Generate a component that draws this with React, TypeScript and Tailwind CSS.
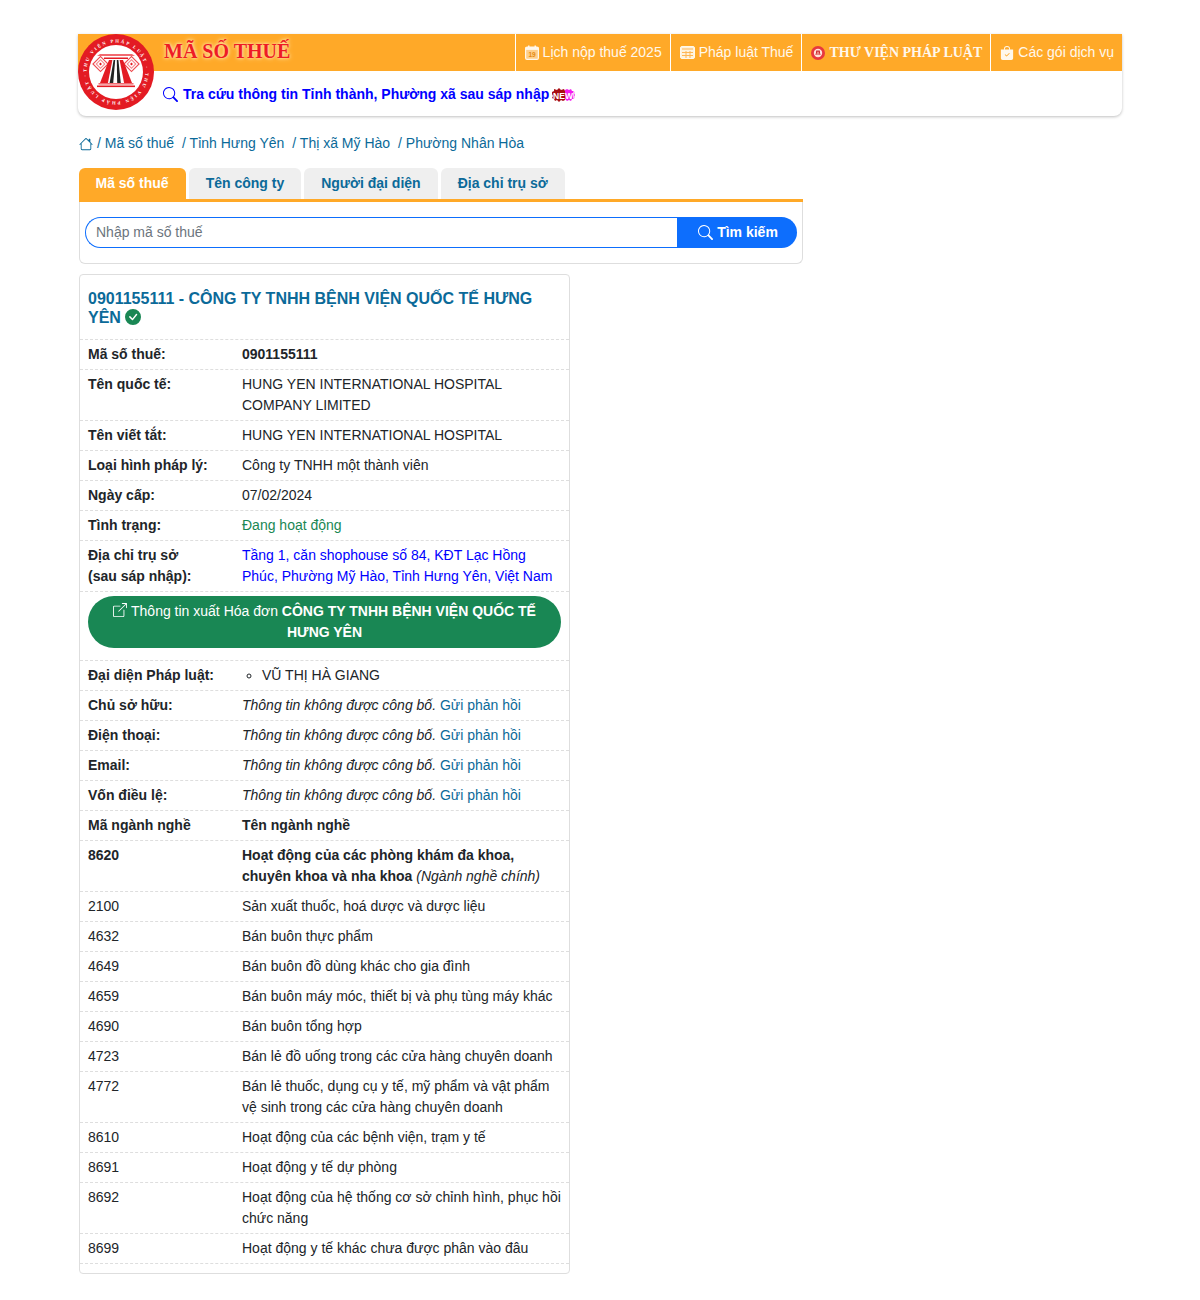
import type { ReactNode } from 'react';
import {
  BsBagCheckFill,
  BsBoxArrowUpRight,
  BsCheckCircleFill,
  BsHouse,
  BsSearch,
} from 'react-icons/bs';

function Spiral({ cx, cy }: { cx: number; cy: number }) {
  return (
    <g transform={`rotate(45 ${cx} ${cy})`} fill="none">
      <rect x={cx - 5.3} y={cy - 5.3} width="10.6" height="10.6" stroke="#ef4a50" strokeWidth="1.2" />
      <rect x={cx - 3} y={cy - 3} width="6" height="6" stroke="#f58a8e" strokeWidth="1.1" />
      <rect x={cx - 1} y={cy - 1} width="2" height="2" fill="#e31b23" />
    </g>
  );
}

function Logo({ size }: { size: number }) {
  return (
    <svg width={size} height={size} viewBox="0 0 76 76">
      <circle cx="38" cy="38" r="38" fill="#e31b23" />
      <circle cx="38" cy="38" r="27" fill="#fff" />
      <defs>
        <path id="ring" d="M38 38 m-29.5 0 a29.5 29.5 0 1 1 59 0 a29.5 29.5 0 1 1 -59 0" />
      </defs>
      <text fontSize="4.6" fontWeight="700" fill="#fff" fontFamily="'Liberation Serif', serif">
        <textPath href="#ring" textLength="182">THƯ VIỆN PHÁP LUẬT · THƯ VIỆN PHÁP LUẬT ·</textPath>
      </text>
      <path d="M22 20h32l3 2H19z" fill="#f26a70" />
      <rect x="26" y="23.5" width="24" height="1.5" fill="#e31b23" />
      <Spiral cx={22.5} cy={30} />
      <Spiral cx={53.5} cy={30} />
      {/* column stripes, wider at the foot */}
      <path d="M31 26h3.4l-4.5 23H22z" fill="#e31b23" />
      <path d="M35.6 26h1.6l-2 23h-3.6z" fill="#222" />
      <path d="M38.8 26h1.6l2.4 23h-3.6z" fill="#222" />
      <path d="M41.6 26H45l9 23h-7.9z" fill="#e31b23" />
      <rect x="20.5" y="49" width="35" height="1.6" fill="#f26a70" />
      <rect x="19" y="51.5" width="38" height="1.6" fill="#e31b23" />
    </svg>
  );
}

function CalendarIcon() {
  return (
    <svg width="14" height="15" viewBox="0 0 14 15">
      <rect x="0.6" y="2.1" width="12.8" height="12.3" rx="1.5" fill="#ffcf8a" stroke="#fff8ec" strokeWidth="1.2" />
      <rect x="0.6" y="2.1" width="12.8" height="2.8" fill="#fff8ec" />
      <rect x="3" y="0.5" width="1.5" height="2.5" fill="#fff8ec" />
      <rect x="9.5" y="0.5" width="1.5" height="2.5" fill="#fff8ec" />
      <text x="7" y="12" textAnchor="middle" fontSize="6.5" fontWeight="700" fill="#e58a10" fontFamily="'Liberation Sans', sans-serif">19</text>
    </svg>
  );
}

function TableIcon() {
  return (
    <svg width="15" height="13" viewBox="0 0 15 13">
      <rect x="0.5" y="0.5" width="14" height="12" rx="1.5" fill="#fff3dc" stroke="#fff8ec" />
      <rect x="2" y="2" width="11" height="2" fill="#ffd49a" />
      <path d="M2 6.5h11M2 9.5h11M6 5v7M10 5v7" stroke="#ffb655" strokeWidth="1" fill="none" />
    </svg>
  );
}

function SmallLogo() {
  return (
    <svg width="14" height="14" viewBox="0 0 14 14">
      <circle cx="7" cy="7" r="7" fill="#e8383e" />
      <circle cx="7" cy="7" r="4.2" fill="#ffe3dc" />
      <path d="M5.2 5h3.6M5.8 5l-.8 4M8.2 5l.8 4M7 5v4" stroke="#c8171e" strokeWidth="0.9" fill="none" />
    </svg>
  );
}

function NewBadge() {
  return (
    <svg width="23" height="14" viewBox="0 0 23 14" className="ml-[3px]">
      <path d="M0 4l2-1 0-2 3 1 2-2 2 2 3-1 1 2v9l-2 1-2-1-2 2-2-2-2 1-1-2-2-1 1-2-1-2z" fill="#a80d12" />
      <path d="M13 2l2-1 2 1 2-1 1 2 2 0 0 2 1 2-1 2 0 2-2 0-1 2-2-1-2 1-2-2z" fill="#f41cf0" />
      <path d="M21 3l2 1-1 3 1 3-2 1z" fill="#fbb6f6" />
      <text x="11" y="10.5" textAnchor="middle" fontSize="8.5" fontWeight="700" fill="#fff" fontFamily="'Liberation Sans', sans-serif">NEW</text>
    </svg>
  );
}

function NavCell({ icon, children, bold }: { icon: ReactNode; children: ReactNode; bold?: boolean }) {
  return (
    <div className="flex h-full items-center gap-[4px] border-l border-white pl-[9px] pr-[8px] text-[#fff8ec]">
      {icon}
      <span className={bold ? "font-['Liberation_Serif',serif] text-[14px] font-bold" : 'text-[14px]'}>{children}</span>
    </div>
  );
}

function Row({ label, children, bold }: { label: ReactNode; children: ReactNode; bold?: boolean }) {
  return (
    <div className="flex border-b border-dashed border-[#dedede] py-[4px]">
      <div className={`w-[162px] shrink-0 pl-[8px] ${bold === false ? '' : 'font-bold'}`}>{label}</div>
      <div className="min-w-0 flex-1 pr-[7px]">{children}</div>
    </div>
  );
}

const hidden = (
  <>
    <i>Thông tin không được công bố.</i> <span className="text-[#0b6a99]">Gửi phản hồi</span>
  </>
);

const careers = [
  ['2100', 'Sản xuất thuốc, hoá dược và dược liệu'],
  ['4632', 'Bán buôn thực phẩm'],
  ['4649', 'Bán buôn đồ dùng khác cho gia đình'],
  ['4659', 'Bán buôn máy móc, thiết bị và phụ tùng máy khác'],
  ['4690', 'Bán buôn tổng hợp'],
  ['4723', 'Bán lẻ đồ uống trong các cửa hàng chuyên doanh'],
  ['4772', 'Bán lẻ thuốc, dụng cụ y tế, mỹ phẩm và vật phẩm vệ sinh trong các cửa hàng chuyên doanh'],
  ['8610', 'Hoạt động của các bệnh viện, trạm y tế'],
  ['8691', 'Hoạt động y tế dự phòng'],
  ['8692', 'Hoạt động của hệ thống cơ sở chỉnh hình, phục hồi chức năng'],
  ['8699', 'Hoạt động y tế khác chưa được phân vào đâu'],
];

const tabs = ['Mã số thuế', 'Tên công ty', 'Người đại diện', 'Địa chỉ trụ sở'];

export default function App() {
  return (
    <div className="bg-white pb-[27px] pt-[34px] font-['Liberation_Sans',sans-serif] text-[14px] leading-[21px] text-[#212529]">
      <div className="mx-auto w-[1044px]">
        {/* Header */}
        <header className="relative h-[82px] rounded-b-[8px] bg-white shadow-[0_1px_3px_rgba(0,0,0,0.25)]">
          <div className="absolute left-0 top-0 z-10">
            <Logo size={76} />
          </div>
          <div className="flex h-[37px] items-center justify-between bg-[#ffa928] pl-[86px]">
            <div className="-mt-[3px] font-['Liberation_Serif',serif] text-[20px] font-bold text-[#ee1c25] [text-shadow:0_0_3px_#ffe9b0,0_0_5px_#ffe9b0]">
              MÃ SỐ THUẾ
            </div>
            <nav className="flex h-full items-center">
              <NavCell icon={<CalendarIcon />}>Lịch nộp thuế 2025</NavCell>
              <NavCell icon={<TableIcon />}>Pháp luật Thuế</NavCell>
              <NavCell bold icon={<SmallLogo />}>THƯ VIỆN PHÁP LUẬT</NavCell>
              <NavCell icon={<BsBagCheckFill size={14} />}>Các gói dịch vụ</NavCell>
            </nav>
          </div>
          <div className="flex items-center pl-[85px] pt-[13px] font-bold text-[#0000ff]">
            <BsSearch size={15} className="mr-[5px]" />
            <span>Tra cứu thông tin Tỉnh thành, Phường xã sau sáp nhập</span>
            <NewBadge />
          </div>
        </header>

        {/* Breadcrumb */}
        <div className="ml-[1px] mt-[17px] flex items-center text-[#0b6a99]">
          <BsHouse size={14} className="mr-[4px]" />
          <span>/ Mã số thuế</span>
          <span className="ml-[8px]">/ Tỉnh Hưng Yên</span>
          <span className="ml-[8px]">/ Thị xã Mỹ Hào</span>
          <span className="ml-[8px]">/ Phường Nhân Hòa</span>
        </div>

        {/* Search box */}
        <div className="ml-[1px] mt-[14px] w-[724px]">
          <div className="flex gap-[3px] border-b-[3px] border-[#ffa928]">
            {tabs.map((t, i) => (
              <div
                key={t}
                className={`flex h-[31px] items-center rounded-t-[6px] font-bold ${
                  i === 0 ? 'bg-[#ffa928] pl-[16.5px] pr-[17px] text-white' : 'bg-[#efefef] px-[17px] text-[#0b6a99]'
                }`}
              >
                {t}
              </div>
            ))}
          </div>
          <div className="rounded-b-[6px] border border-t-0 border-[#dedede] px-[5px] pb-[15px] pt-[15px]">
            <div className="flex h-[31px]">
              <div className="flex flex-1 items-center rounded-l-full border border-r-0 border-[#0d6efd] pl-[10px] text-[#6c757d]">
                Nhập mã số thuế
              </div>
              <div className="flex w-[120px] items-center justify-center gap-[4px] rounded-r-full bg-[#0d6efd] pl-[2px] font-bold text-white">
                <BsSearch size={15} />
                Tìm kiếm
              </div>
            </div>
          </div>
        </div>

        {/* Company card */}
        <div className="ml-[1px] mt-[10px] w-[491px] rounded-[4px] border border-[#dedede] pb-[9px]">
          <h1 className="border-b border-dashed border-[#dedede] px-[8px] pb-[12px] pt-[14px] text-[16px] font-bold leading-[19px] text-[#0b6a99]">
            0901155111 - CÔNG TY TNHH BỆNH VIỆN QUỐC TẾ HƯNG YÊN{' '}
            <BsCheckCircleFill size={16} className="inline-block align-[-2px] text-[#198754]" />
          </h1>
          <Row label="Mã số thuế:"><b>0901155111</b></Row>
          <Row label="Tên quốc tế:">HUNG YEN INTERNATIONAL HOSPITAL COMPANY LIMITED</Row>
          <Row label="Tên viết tắt:">HUNG YEN INTERNATIONAL HOSPITAL</Row>
          <Row label="Loại hình pháp lý:">Công ty TNHH một thành viên</Row>
          <Row label="Ngày cấp:">07/02/2024</Row>
          <Row label="Tình trạng:"><span className="text-[#198754]">Đang hoạt động</span></Row>
          <Row label={<>Địa chỉ trụ sở<br />(sau sáp nhập):</>}>
            <span className="text-[#0000ff]">Tầng 1, căn shophouse số 84, KĐT Lạc Hồng Phúc, Phường Mỹ Hào, Tỉnh Hưng Yên, Việt Nam</span>
          </Row>
          <div className="border-b border-dashed border-[#dedede] pb-[12px] pl-[8px] pr-[8px] pt-[4px]">
            <div className="rounded-[26px] bg-[#198754] px-[24px] py-[5px] text-center text-white">
              <BsBoxArrowUpRight size={14} className="mr-[4px] inline-block align-[-1px]" />
              Thông tin xuất Hóa đơn <b>CÔNG TY TNHH BỆNH VIỆN QUỐC TẾ HƯNG YÊN</b>
            </div>
          </div>
          <Row label="Đại diện Pháp luật:">
            <ul className="list-[circle] pl-[20px]"><li>VŨ THỊ HÀ GIANG</li></ul>
          </Row>
          <Row label="Chủ sở hữu:">{hidden}</Row>
          <Row label="Điện thoại:">{hidden}</Row>
          <Row label="Email:">{hidden}</Row>
          <Row label="Vốn điều lệ:">{hidden}</Row>
          <Row label="Mã ngành nghề"><b>Tên ngành nghề</b></Row>
          <Row label="8620">
            <b>Hoạt động của các phòng khám đa khoa, chuyên khoa và nha khoa</b> <i>(Ngành nghề chính)</i>
          </Row>
          {careers.map(([code, name]) => (
            <Row key={code} label={code} bold={false}>{name}</Row>
          ))}
        </div>
      </div>
    </div>
  );
}
